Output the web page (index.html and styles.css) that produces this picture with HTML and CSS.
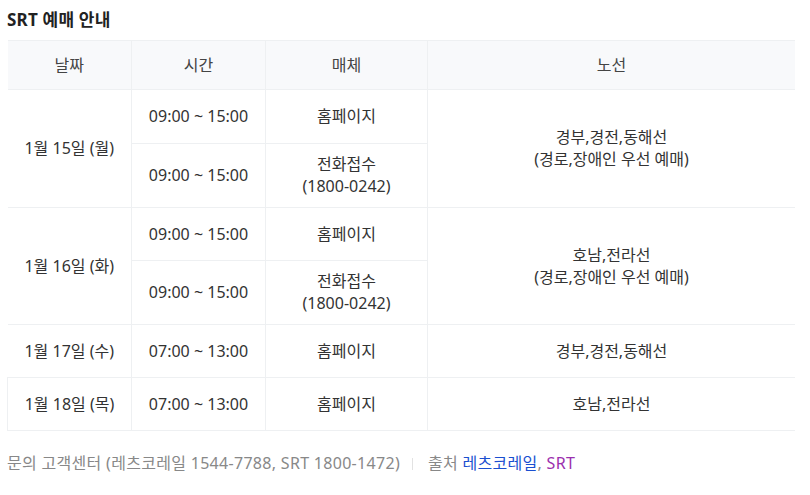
FILE: index.html
```html
<!DOCTYPE html>
<html lang="ko">
<head>
	<meta charset="UTF-8">
	<title>SRT 예매 안내</title>
	<link rel="stylesheet" href="styles.css">
</head>
<body>
<div class="wrap">
    <h3 class="title">SRT 예매 안내</h3>
    <table class="info">
        <colgroup>
            <col class="c-date">
            <col class="c-time">
            <col class="c-media">
            <col class="c-line">
        </colgroup>
        <thead>
            <tr>
                <th>날짜</th>
                <th>시간</th>
                <th>매체</th>
                <th>노선</th>
            </tr>
        </thead>
        <tbody>
            <tr>
                <td rowspan="2">1월 15일 (월)</td>
                <td>09:00 ~ 15:00</td>
                <td>홈페이지</td>
                <td rowspan="2">경부,경전,동해선<br>(경로,장애인 우선 예매)</td>
            </tr>
            <tr>
                <td>09:00 ~ 15:00</td>
                <td>전화접수<br>(1800-0242)</td>
            </tr>
            <tr>
                <td rowspan="2">1월 16일 (화)</td>
                <td>09:00 ~ 15:00</td>
                <td>홈페이지</td>
                <td rowspan="2">호남,전라선<br>(경로,장애인 우선 예매)</td>
            </tr>
            <tr>
                <td>09:00 ~ 15:00</td>
                <td>전화접수<br>(1800-0242)</td>
            </tr>
            <tr>
                <td>1월 17일 (수)</td>
                <td>07:00 ~ 13:00</td>
                <td>홈페이지</td>
                <td>경부,경전,동해선</td>
            </tr>
            <tr>
                <td>1월 18일 (목)</td>
                <td>07:00 ~ 13:00</td>
                <td>홈페이지</td>
                <td>호남,전라선</td>
            </tr>
        </tbody>
    </table>
    <p class="source">
        문의 고객센터 (레츠코레일 1544-7788, SRT 1800-1472)
        <span class="bar"></span>
        출처 <a href="javascript:;" class="link">레츠코레일</a>, <a href="javascript:;" class="link visited">SRT</a>
    </p>
</div>
</body>
</html>
```

FILE: styles.css
```css
*
{
    margin: 0;
    padding: 0;
    box-sizing: border-box;
}
body
{
    font-family: "Noto Sans", "Noto Sans CJK KR", sans-serif;
    color: #333;
    background: #fff;
}
.wrap
{
    width: 788px;
    margin-left: 7px;
    padding-top: 8px;
}
.title
{
    font-size: 17px;
    font-weight: bold;
    line-height: 24px;
    letter-spacing: 0.2px;
    color: #222;
    margin-bottom: 8px;
}
.info
{
    width: 100%;
    border-collapse: collapse;
    table-layout: fixed;
    font-size: 16px;
    line-height: 22px;
}
.c-date { width: 124px; }
.c-time { width: 134px; }
.c-media { width: 162px; }
.info th,
.info td
{
    text-align: center;
    vertical-align: middle;
    border: 1px solid #eef0f2;
    padding: 9px 4px 10px;
}
.info tr > :first-child { border-left: 0; }
.info tr > :last-child { border-right: 0; }
.info tbody tr:nth-child(2n) > td:first-child { border-left: 1px solid #eef0f2; }
.info th
{
    height: 49px;
    font-weight: normal;
    color: #444;
    background: #f8f9fb;
}
.info td
{
    height: 53px;
    color: #333;
}
.info tbody tr:first-child td
{
    height: 54px;
}
.source
{
    margin-top: 21px;
    font-size: 16px;
    line-height: 22px;
    letter-spacing: 0.3px;
    color: #888;
}
.bar
{
    display: inline-block;
    width: 1px;
    height: 12px;
    margin: 0 10px 0 8px;
    vertical-align: -1px;
    background: #e2e2e2;
}
.link
{
    color: #1a4fd0;
    text-decoration: none;
}
.link.visited
{
    color: #9b2fae;
}
```
